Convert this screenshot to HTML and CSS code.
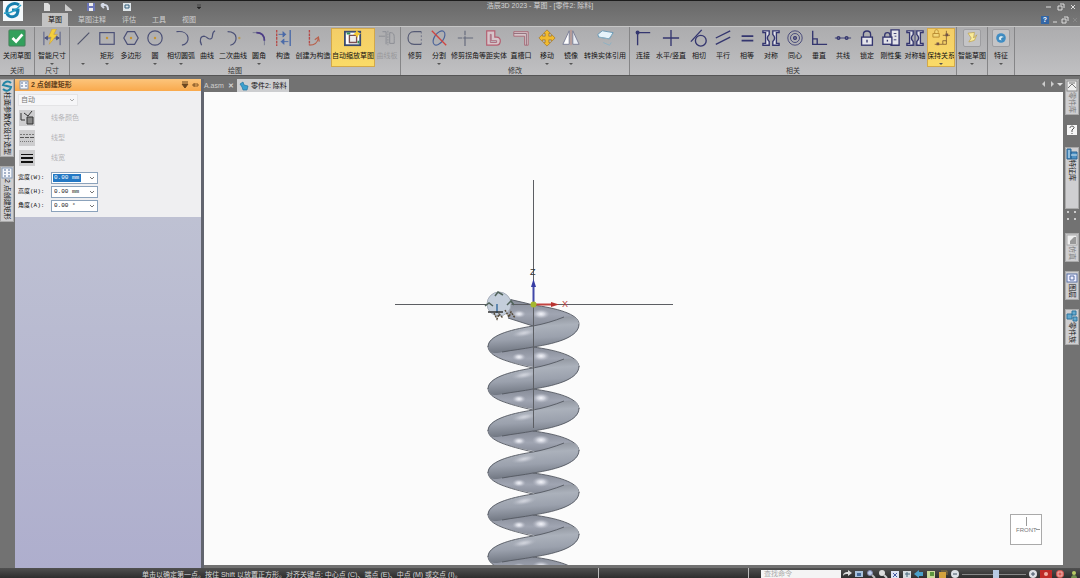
FILE: index.html
```
<!DOCTYPE html>
<html lang="zh-CN">
<head>
    <meta charset="UTF-8">
    <meta name="viewport" content="width=device-width, initial-scale=1.0">
    <title>浩辰3D 2023 - 草图 - [零件2: 除料]</title>
    <link rel="stylesheet" href="styles.css">
</head>
<body>
    <header class="header">
        <button class="logo" aria-label="应用程序菜单">
            <svg width="20" height="20" viewBox="0 0 20 20"><path d="M16 4C12 1 5 3 4 9c-1 6 4 8 8 6 2-1 3-3 3-6H9" fill="none" stroke="#167fae" stroke-width="3"/><path d="M1 12c5 1 11-2 17-8" fill="none" stroke="#2aa3c8" stroke-width="1.500"/></svg>
        </button>
        <div class="titlebar">
            <div class="quick">
                <button aria-label="新建"><svg width="10" height="9" viewBox="0 0 10 9"><path d="M2 0h4l2 2v6H2z" fill="#ddd"/></svg></button>
                <button aria-label="打开"><svg width="10" height="9" viewBox="0 0 10 9"><path d="M1 1l7 6v1H1z" fill="#ccc"/></svg></button>
                <button aria-label="保存"><svg width="10" height="9" viewBox="0 0 10 9"><path d="M1 0h8v8H1z" fill="#6c76b8"/><path d="M3 0h4v3H3zM3 5h4v3H3z" fill="#eee"/></svg></button>
                <button aria-label="撤销"><svg width="10" height="9" viewBox="0 0 10 9"><path d="M1 2h4c3 0 3 3 3 5M1 2l3-2M1 2l3 3" fill="none" stroke="#d5dbe8" stroke-width="2"/></svg></button>
                <button aria-label="选项"><svg width="10" height="9" viewBox="0 0 10 9"><path d="M1 0h8v8H1z" fill="#dfe6ea"/><path d="M3 2h4v3H3z" fill="none" stroke="#36607c"/></svg></button>
                <button class="more" aria-label="自定义快速访问工具栏"><svg width="6" height="6" viewBox="0 0 6 6"><path d="M1 1h4M1 3h4L3 5z" fill="#222" stroke="#222" stroke-width=".5"/></svg></button>
            </div>
            <div class="title">浩辰3D 2023 - 草图 - [零件2: 除料]</div>
            <div class="winbtns">
                <button aria-label="最小化"><svg width="8" height="8" viewBox="0 0 8 8"><path d="M1 4h5" stroke="#ddd" stroke-width="1"/></svg></button>
                <button aria-label="还原"><svg width="8" height="8" viewBox="0 0 8 8"><path d="M1 3h4v4H1zM3 1h4v4" fill="none" stroke="#ddd"/></svg></button>
                <button aria-label="关闭"><svg width="8" height="8" viewBox="0 0 8 8"><path d="M2 2l4 4M6 2L2 6" stroke="#ddd" stroke-width="1"/></svg></button>
            </div>
        </div>
        <div class="tabrow">
            <nav class="tabs">
                <a href="#" class="active">草图</a>
                <a href="#">草图注释</a>
                <a href="#">评估</a>
                <a href="#">工具</a>
                <a href="#">视图</a>
            </nav>
            <div class="docbtns">
                <button class="help" aria-label="帮助">?</button>
                <button aria-label="最小化文档"><svg width="8" height="8" viewBox="0 0 8 8"><path d="M2 6h4" stroke="#ddd"/></svg></button>
                <button aria-label="还原文档"><svg width="8" height="8" viewBox="0 0 8 8"><path d="M1 3h4v4H1zM3 1h4v4" fill="none" stroke="#ddd"/></svg></button>
                <button aria-label="关闭文档"><svg width="8" height="8" viewBox="0 0 8 8"><path d="M2 2l4 4M6 2L2 6" stroke="#888"/></svg></button>
            </div>
        </div>
    </header>

    <section class="ribbon">
        <div class="group">
            <div class="tools">
                <button class="tool w32"><svg width="20" height="20" viewBox="0 0 20 20"><rect x="1" y="1" width="18" height="18" rx="1" fill="#32a05c" stroke="#4c7a5c"/><path d="M5 10l4 4 7-8" fill="none" stroke="#fff" stroke-width="3"/></svg><span>关闭草图</span></button>
            </div>
            <div class="caption">关闭</div>
        </div>
        <div class="group">
            <div class="tools">
                <button class="tool w32"><svg width="20" height="20" viewBox="0 0 20 20"><path d="M1 3v15M19 3v15M2 10h16M2 10l3-2v4zM18 10l-3-2v4z" fill="#4d5580" stroke="#4d5580"/><path d="M10 0h5l-3 6h4L7 17l2-8H6z" fill="#f3cf3c" stroke="#c8983a" stroke-width=".6"/></svg><span>智能尺寸</span><i class="drop"></i></button>
            </div>
            <div class="caption">尺寸</div>
        </div>
        <div class="group">
            <div class="tools">
                <button class="tool w24" aria-label="直线"><svg width="20" height="20" viewBox="0 0 20 20"><path d="M4 17L17 4" stroke="#50546c" stroke-width="1.300"/></svg><span>&nbsp;</span><i class="drop"></i></button>
                <button class="tool w24"><svg width="20" height="20" viewBox="0 0 20 20"><rect x="2" y="4" width="16" height="13" fill="none" stroke="#4b5076" stroke-width="1.300"/><circle cx="10" cy="10" r="1.300" fill="#c7942f"/></svg><span>矩形</span><i class="drop"></i></button>
                <button class="tool w24"><svg width="20" height="20" viewBox="0 0 20 20"><path d="M6 3h8L18 10l-4 7H6L2 10z" fill="none" stroke="#4b5076" stroke-width="1.300"/><circle cx="10" cy="10" r="1.300" fill="#c7942f"/></svg><span>多边形</span></button>
                <button class="tool w24"><svg width="20" height="20" viewBox="0 0 20 20"><circle cx="10" cy="10" r="8" fill="none" stroke="#4b5076" stroke-width="1.300"/><circle cx="10" cy="10" r="1.300" fill="#c7942f"/></svg><span>圆</span><i class="drop"></i></button>
                <button class="tool w28"><svg width="20" height="20" viewBox="0 0 20 20"><path d="M5 3c16-2 16 14 6 15" fill="none" stroke="#4b5076" stroke-width="1.300"/></svg><span>相切圆弧</span><i class="drop"></i></button>
                <button class="tool w24"><svg width="20" height="20" viewBox="0 0 20 20"><path d="M4 18C1 12 3 8 7 8c4 1 4 4 7 3 4-1 0-7 5-9" fill="none" stroke="#4b5076" stroke-width="1.300"/></svg><span>曲线</span></button>
                <button class="tool w28"><svg width="20" height="20" viewBox="0 0 20 20"><path d="M4 3c12 0 12 13 3 15" fill="none" stroke="#4b5076" stroke-width="1.300"/><circle cx="17" cy="10" r="1.300" fill="#b79a58"/></svg><span>二次曲线</span></button>
                <button class="tool w24"><svg width="20" height="20" viewBox="0 0 20 20"><path d="M3 4h4q9 0 9 9v5" fill="none" stroke="#777b90"/><path d="M7 4q9 0 9 9" fill="none" stroke="#4c3c86" stroke-width="2"/></svg><span>圆角</span><i class="drop"></i></button>
                <button class="tool w24"><svg width="20" height="20" viewBox="0 0 20 20"><path d="M3 1v18" stroke="#b64a48" stroke-width="1.500" stroke-dasharray="3 1"/><path d="M18 1v18" stroke="#4a6aa8" stroke-width="1.500"/><path d="M5 6h8M13 6l-3-3v6zM16 14H8M8 14l3-3v6z" fill="#4a6aa8" stroke="#4a6aa8"/></svg><span>构造</span></button>
                <button class="tool w36"><svg width="20" height="20" viewBox="0 0 20 20"><path d="M6 1v17" stroke="#b64a48" stroke-width="1.500" stroke-dasharray="3 1"/><path d="M6 18c5 0 9-2 10-8M12 12l4-3 1 5" fill="none" stroke="#b8614c" stroke-width="1.300"/></svg><span>创建为构造</span></button>
                <button class="tool w44 on"><svg width="20" height="20" viewBox="0 0 20 20"><rect x="1" y="3" width="17" height="15" fill="#fff" stroke="#3a4b70" stroke-width="2"/><path d="M6 7h8v8H6z" fill="#eee" stroke="#7c4f50" stroke-width="1.500"/><path d="M3 4h4v2H3zM15 13h2v3h-2z" fill="#338a58"/><path d="M14 1l2 3 3 1-3 2-1 3-2-3-3-1 3-2z" fill="#f2c836"/></svg><span>自动缩放草图</span></button>
                <button class="tool w24" disabled><svg width="20" height="20" viewBox="0 0 20 20"><path d="M5 3h4v14M1 8h7M13 4c6 0 5 3 5 12h-5z" fill="none" stroke="#898b92"/><path d="M11 2v16" stroke="#898b92" stroke-dasharray="2 1"/></svg><span>曲线板</span></button>
            </div>
            <div class="caption">绘图</div>
        </div>
        <div class="group wide">
            <div class="tools">
                <button class="tool w24"><svg width="20" height="20" viewBox="0 0 20 20"><path d="M17 3H9C0 3 0 17 9 17h8" fill="none" stroke="#555a74" stroke-width="1.300"/><path d="M17 3v14" stroke="#696d82" stroke-dasharray="2 2"/></svg><span>修剪</span></button>
                <button class="tool w24"><svg width="20" height="20" viewBox="0 0 20 20"><ellipse cx="10" cy="10" rx="5" ry="9" transform="rotate(35 10 10)" fill="none" stroke="#4a6298" stroke-width="1.300"/><path d="M2 2l16 16" stroke="#cf4541" stroke-width="1.500"/></svg><span>分割</span><i class="drop"></i></button>
                <button class="tool w28"><svg width="20" height="20" viewBox="0 0 20 20"><path d="M10 10h9M10 10v9" stroke="#656a7c" stroke-width="1.300"/><path d="M2 10h8M10 2v8" stroke="#656a7c" stroke-width="1.300" stroke-dasharray="5 1"/></svg><span>修剪拐角</span></button>
                <button class="tool w28"><svg width="20" height="20" viewBox="0 0 20 20"><path d="M3 2h9v7h2c6 0 5 9 0 9H3z" fill="#d6c5ca" stroke="#b45e70" stroke-width="1.300"/><path d="M7 6h1v7h6v2H7z" fill="#c1c1c4" stroke="#a9687a"/></svg><span>等距实体</span></button>
                <button class="tool w28"><svg width="20" height="20" viewBox="0 0 20 20"><path d="M2 3h16v15h-4V8H2z" fill="#d6c5ca" stroke="#a96774"/><path d="M2 5h14v13" fill="none" stroke="#8b6b76"/></svg><span>直槽口</span></button>
                <button class="tool w24"><svg width="20" height="20" viewBox="0 0 20 20"><path d="M10 1l4 4h-2v3h3V6l4 4-4 4v-2h-3v3h2l-4 4-4-4h2v-3H5v2l-4-4 4-4v2h3V5H6z" fill="#f2bb2d" stroke="#a77926" stroke-width=".8"/></svg><span>移动</span><i class="drop"></i></button>
                <button class="tool w24"><svg width="20" height="20" viewBox="0 0 20 20"><path d="M8 2v15H1z" fill="#fff" stroke="#777a93"/><path d="M12 2v15h7z" fill="#e9edf4" stroke="#777a93"/><path d="M10 1v17" stroke="#bd8780"/></svg><span>镜像</span><i class="drop"></i></button>
                <button class="tool w44"><svg width="20" height="20" viewBox="0 0 20 20"><path d="M2 6l5-4 12 2-4 7-12-2z" fill="#e6f3fa" stroke="#6595b2"/><path d="M3 9l11 2 5-6M8 15l7 3 2-3" fill="none" stroke="#8cb1c4"/></svg><span>转换实体引用</span></button>
            </div>
            <div class="caption">修改</div>
        </div>
        <div class="group">
            <div class="tools">
                <button class="tool w24 navy"><svg width="20" height="20" viewBox="0 0 20 20"><path d="M4 18V4h14"/><circle cx="4" cy="4" r="1.500"/></svg><span>连接</span></button>
                <button class="tool w32 navy"><svg width="20" height="20" viewBox="0 0 20 20"><path d="M10 1v18M1 10h18"/></svg><span>水平/竖直</span></button>
                <button class="tool w24 navy"><svg width="20" height="20" viewBox="0 0 20 20"><circle cx="12" cy="13" r="6"/><path d="M1 14L13 1"/></svg><span>相切</span></button>
                <button class="tool w24 navy"><svg width="20" height="20" viewBox="0 0 20 20"><path d="M2 10l16-8M2 17l16-8"/></svg><span>平行</span></button>
                <button class="tool w24 navy"><svg width="20" height="20" viewBox="0 0 20 20"><path d="M4 8h13M4 13h13" stroke-width="2"/></svg><span>相等</span></button>
                <button class="tool w24 navy"><svg width="20" height="20" viewBox="0 0 20 20"><path class="light" d="M1 2h7v4q-4 4 0 8v4H1v-2h3V4H1zM19 2h-7v4q4 4 0 8v4h7v-2h-3V4h3z"/></svg><span>对称</span></button>
                <button class="tool w24 navy"><svg width="20" height="20" viewBox="0 0 20 20"><circle cx="10" cy="10" r="8" stroke-width=".9"/><circle cx="10" cy="10" r="5" stroke-width=".9"/><circle cx="10" cy="10" r="1.500"/></svg><span>同心</span></button>
                <button class="tool w24 navy"><svg width="20" height="20" viewBox="0 0 20 20"><path d="M3 2v15h16M3 11h5v6"/></svg><span>垂直</span></button>
                <button class="tool w24 navy"><svg width="20" height="20" viewBox="0 0 20 20"><path d="M1 10h18" stroke-width="1"/><circle cx="5" cy="10" r="1.500"/><circle cx="14" cy="10" r="1.500"/></svg><span>共线</span></button>
                <button class="tool w24 navy"><svg width="20" height="20" viewBox="0 0 20 20"><path d="M6 9V6c0-5 8-5 8 0v3"/><rect class="light" x="4" y="9" width="12" height="9"/><path d="M10 12v3"/></svg><span>锁定</span></button>
                <button class="tool w24 navy"><svg width="20" height="20" viewBox="0 0 20 20"><path class="light" d="M10 1h9v17h-9z"/><path d="M13 5h3M14 8h2M13 12h3" stroke-width="1"/><path d="M3 9V7c0-4 6-4 6 0v2"/><rect class="light" x="1" y="9" width="10" height="8"/><path d="M6 12v2"/></svg><span>刚性集</span></button>
                <button class="tool w24 navy"><svg width="20" height="20" viewBox="0 0 20 20"><path class="light" d="M1 2h7v4q-4 4 0 8v4H1v-2h3V4H1zM19 2h-7v4q4 4 0 8v4h7v-2h-3V4h3z"/><path d="M10 1v18" stroke-width="1"/></svg><span>对称轴</span></button>
                <button class="tool w28 on"><svg width="20" height="20" viewBox="0 0 20 20"><path d="M3 5V3c0-3 4-3 4 0v1M1 5h7v4H1z" fill="#f3d778" stroke="#b78830"/><path d="M3 17h9M12 13h4v4h-4zM16 14V2M12 7h8" fill="none" stroke="#8a6639"/><path d="M5 15h3v3H5zM15 5h3v3h-3z" fill="#715349"/></svg><span>保持关系</span><i class="drop"></i></button>
            </div>
            <div class="caption">相关</div>
        </div>
        <div class="group">
            <div class="tools">
                <button class="tool w28 framed"><svg width="20" height="20" viewBox="0 0 20 20"><path d="M5 4l4 6-3 5 7-2 3-7-4 4 1-7z" fill="#f9eb9a" stroke="#b89a42" stroke-width=".8"/></svg><span>智能草图</span><i class="drop"></i></button>
            </div>
        </div>
        <div class="group">
            <div class="tools">
                <button class="tool w24 framed"><svg width="20" height="20" viewBox="0 0 20 20"><circle cx="10" cy="10" r="6" fill="#3f8dc4"/><path d="M7 12c-1-6 6-6 7-2-3-1-4 0-3 3" fill="#d6ecf5" stroke="#256e9f" stroke-width=".7"/></svg><span>特征</span><i class="drop"></i></button>
            </div>
        </div>
    </section>

    <div class="workspace">
        <aside class="rail">
            <button class="railtab"><svg width="12" height="12" viewBox="0 0 12 12"><path d="M10 3C7 0 3 2 2 5l8 2c-1 4-5 5-8 2" fill="none" stroke="#2385a5" stroke-width="2"/></svg>柱面参数化设计选型</button>
            <button class="railtab"><svg width="12" height="12" viewBox="0 0 12 12"><rect x="1" y="1" width="10" height="10" fill="#f4f6fa" stroke="#8096b3"/><path d="M3 3h2M3 6h2M3 9h2M7 3h2M7 6h2M7 9h2" stroke="#587199"/></svg>2 点创建矩形</button>
        </aside>

        <section class="panel">
            <div class="panelhead">
                <svg width="10" height="10" viewBox="0 0 10 10"><rect x="1" y="1" width="8" height="8" fill="#f4f6fa" stroke="#8096b3"/><path d="M2 3h2M2 6h2M6 3h2M6 6h2" stroke="#587199"/></svg>
                <h1>2 点创建矩形</h1>
                <button aria-label="面板菜单"><svg width="8" height="8" viewBox="0 0 8 8"><path d="M1 1h6M1 3h6L4 7z" fill="#6b4620" stroke="#6b4620"/></svg></button>
                <button aria-label="固定面板"><svg width="8" height="8" viewBox="0 0 8 8"><path d="M1 4h2M3 2v4M3 3h4v2H3z" fill="none" stroke="#8a5c2b"/></svg></button>
            </div>
            <form class="panelbody">
                <div class="combo style">
                    <select aria-label="样式" disabled><option>自动</option></select>
                    <svg width="8" height="8" viewBox="0 0 8 8"><path d="M2 3l2 2 2-2" fill="none" stroke="#aaa"/></svg>
                </div>
                <div class="prop"><button type="button" id="color" aria-label="线条颜色"><svg width="16" height="16" viewBox="0 0 16 16"><path d="M2 3v7h4M13 1L9 6M5 3l4 3" fill="none" stroke="#333"/><path d="M8 7h6v7H8z" fill="#888" stroke="#333"/></svg></button><label for="color">线条颜色</label></div>
                <div class="prop"><button type="button" id="linetype" aria-label="线型"><svg width="16" height="16" viewBox="0 0 16 16"><path d="M1 4.500h14" stroke="#777" stroke-dasharray="2 1"/><path d="M1 7.500h14" stroke="#555" stroke-dasharray="4 1"/><path d="M1 11.500h14" stroke="#777" stroke-dasharray="1 1"/></svg></button><label for="linetype">线型</label></div>
                <div class="prop"><button type="button" id="weight" aria-label="线宽"><svg width="16" height="16" viewBox="0 0 16 16"><path d="M2 4.500h12" stroke="#111"/><path d="M2 8h12M2 12h12" stroke="#111" stroke-width="2"/></svg></button><label for="weight">线宽</label></div>
                <div class="fields">
                    <div class="field"><label for="w">宽度(W):</label><div class="combo"><input id="w" class="selected" type="text" value="0.00 mm"><svg width="8" height="8" viewBox="0 0 8 8"><path d="M2 3l2 2 2-2" fill="none" stroke="#777"/></svg></div></div>
                    <div class="field"><label for="h">高度(H):</label><div class="combo"><input id="h" type="text" value="0.00 mm"><svg width="8" height="8" viewBox="0 0 8 8"><path d="M2 3l2 2 2-2" fill="none" stroke="#777"/></svg></div></div>
                    <div class="field"><label for="a">角度(A):</label><div class="combo"><input id="a" type="text" value="0.00 °"><svg width="8" height="8" viewBox="0 0 8 8"><path d="M2 3l2 2 2-2" fill="none" stroke="#777"/></svg></div></div>
                </div>
            </form>
        </section>

        <main class="document">
            <div class="doctabs">
                <button class="doctab">A.asm <b>✕</b></button>
                <button class="doctab current"><svg width="10" height="10" viewBox="0 0 10 10"><path d="M1 3l3-2 1 3 4 1-1 4H4L3 6z" fill="#3aa0cf" stroke="#2475a2" stroke-width=".7"/></svg>零件2: 除料</button>
                <div class="scroll">
                    <button aria-label="上一个"><svg width="6" height="6" viewBox="0 0 6 6"><path d="M4 0v6L1 3z" fill="#ccc"/></svg></button>
                    <button aria-label="下一个"><svg width="6" height="6" viewBox="0 0 6 6"><path d="M2 0v6l3-3z" fill="#ccc"/></svg></button>
                    <button aria-label="列表"><svg width="6" height="6" viewBox="0 0 6 6"><path d="M0 2h6L3 5z" fill="#ddd"/></svg></button>
                </div>
            </div>
            <div class="canvas">
                <svg class="scene" viewBox="204 92 859 474" preserveAspectRatio="xMidYMin slice">
                    <defs>
                        <linearGradient id="front" x1="0" y1="0" x2=".15" y2="1">
                            <stop offset="0" stop-color="#858a93"/>
                            <stop offset=".35" stop-color="#abb1bb"/>
                            <stop offset=".65" stop-color="#9ba1ad"/>
                            <stop offset="1" stop-color="#707681"/>
                        </linearGradient>
                        <linearGradient id="back" x1="0" y1="0" x2="0" y2="1">
                            <stop offset="0" stop-color="#858a96"/>
                            <stop offset=".45" stop-color="#a0a5b2"/>
                            <stop offset="1" stop-color="#777c88"/>
                        </linearGradient>
                        <radialGradient id="shine">
                            <stop offset="0" stop-color="#f4f5fa"/>
                            <stop offset=".4" stop-color="#dddfe8" stop-opacity=".8"/>
                            <stop offset="1" stop-color="#b2b6c2" stop-opacity="0"/>
                        </radialGradient>
                        <g id="backcoil">
                            <path d="M488 346C488 357 508 362 533 367L562 374C575 371 579 369 579 366C579 356 555 350 533 347L505 349Z" fill="url(#back)"/>
                            <path d="M488 346C488 357 508 362 533 368M533 347C556 350 579 356 579 367" fill="none" stroke="#535861" stroke-width=".9"/>
                            <ellipse cx="519" cy="357" rx="7" ry="4" fill="url(#shine)"/>
                            <ellipse cx="541" cy="356" rx="9" ry="5" fill="url(#shine)"/>
                        </g>
                        <g id="frontcoil">
                            <path d="M564 317C554 321 544 324 533 326C508 330 488 336 488 346C488 351 492 355 502 352C513 350 523 349 533 347C560 343 579 336 579 325C579 318 574 315 564 317Z" fill="url(#front)"/>
                            <path d="M564 317C554 321 544 324 533 326C508 330 488 336 488 347M502 352C513 350 523 349 533 347C560 343 579 336 579 324" fill="none" stroke="#535861" stroke-width=".9"/>
                            <ellipse cx="524" cy="333" rx="13" ry="4" transform="rotate(-10 524 333)" fill="url(#shine)" opacity=".6"/>
                        </g>
                    </defs>
                    <path d="M505 298C515 301 523 302 533 305C556 308 579 314 579 324C579 330 570 333 558 334L533 326L508 318Z" fill="url(#back)"/>
                    <path d="M505 298C515 301 523 302 533 305C556 308 579 314 579 324M508 318L533 326" fill="none" stroke="#535861" stroke-width=".9"/>
                    <ellipse cx="519" cy="314" rx="7" ry="4" fill="url(#shine)"/>
                    <ellipse cx="541" cy="314" rx="9" ry="5" fill="url(#shine)"/>
                    <use href="#backcoil"/>
                    <use href="#backcoil" y="42"/>
                    <use href="#backcoil" y="84"/>
                    <use href="#backcoil" y="126"/>
                    <use href="#backcoil" y="168"/>
                    <use href="#backcoil" y="210"/>
                    <use href="#frontcoil"/>
                    <use href="#frontcoil" y="42"/>
                    <use href="#frontcoil" y="84"/>
                    <use href="#frontcoil" y="126"/>
                    <use href="#frontcoil" y="168"/>
                    <use href="#frontcoil" y="210"/>

                    <!-- sketch axes -->
                    <path d="M533.500 180v248M395 304.500h278" stroke="#5c5e63"/>
                    <path d="M533.500 302v-18" stroke="#4148a8" stroke-width="2"/>
                    <path d="M531 287l2.500-8 2.500 8z" fill="#363ca4"/>
                    <path d="M535 304.500h17" stroke="#c14340" stroke-width="2"/>
                    <path d="M551 302l8 2.500-8 2.500z" fill="#b93431"/>
                    <circle cx="533.500" cy="304.500" r="3" fill="#a5b72f"/>
                    <text x="530" y="275" class="axis">Z</text>
                    <text x="562" y="307" class="axis red">X</text>

                    <!-- wire profile and cursor -->
                    <circle cx="499" cy="304" r="12" fill="#c4cedb" stroke="#a8afba"/>
                    <path d="M497 304v9" stroke="#3d6fa0" stroke-width="1.500"/>
                    <path d="M485 306l4-3 4 3M495 296l3-4 5 3M507 305l4-4 3 4" fill="none" stroke="#51635b" stroke-width="1.500"/>
                    <path d="M488 312h15" stroke="#333" stroke-width="1.500"/>
                    <path d="M494 313l3 6 2-5 4 4M505 310l4 7 2-5 4 6" fill="none" stroke="#554a39" stroke-width="1.500" stroke-dasharray="2 1"/>

                    <!-- view cube -->
                    <rect x="1010.500" y="514.500" width="31" height="30" fill="#fff" stroke="#aaa"/>
                    <path d="M1026.500 517v9M1036 529.500h4" stroke="#999"/>
                    <text x="1016" y="532" class="cube">FRONT</text>
                </svg>
            </div>
        </main>

        <aside class="rail right">
            <button class="railtab dim"><svg width="12" height="12" viewBox="0 0 12 12"><rect x="1" y="1" width="10" height="10" fill="#eee" stroke="#888"/><path d="M2 8l4-4 4 4M3 3h6" fill="none" stroke="#777"/></svg>零件库</button>
            <button class="railtab small" aria-label="帮助"><svg width="12" height="12" viewBox="0 0 12 12"><rect x="1" y="1" width="10" height="10" fill="#f5f5f5"/><path d="M4 4c0-3 5-2 4 0L6 6v2M6 9v1" fill="none" stroke="#555"/></svg></button>
            <button class="railtab tall"><svg width="12" height="12" viewBox="0 0 12 12"><path d="M1 1h4v10H1zM5 4h6v7H5z" fill="#4c91c4" stroke="#2b6493"/><path d="M3 2v8M5 7h6" stroke="#d5e9f4"/></svg>特征库</button>
            <div class="grip"><svg width="12" height="12" viewBox="0 0 12 12"><path d="M1 2h2M8 2h2M1 9h2M8 9h2" stroke="#ccc" stroke-width="2"/></svg></div>
            <button class="railtab dim"><svg width="12" height="12" viewBox="0 0 12 12"><rect x="1" y="1" width="10" height="10" fill="#eee" stroke="#aaa"/><path d="M4 10V7l4-4h2v7z" fill="#999"/></svg>仿真</button>
            <button class="railtab"><svg width="12" height="12" viewBox="0 0 12 12"><rect x="1" y="2" width="10" height="8" fill="#eef" stroke="#5871a3"/><path d="M4 4h4v4H4z" fill="none" stroke="#5871a3"/></svg>图层</button>
            <button class="railtab"><svg width="12" height="12" viewBox="0 0 12 12"><path d="M1 4h5v5H1zM6 1h4v4H6zM7 7h4v4H7z" fill="#65aacf" stroke="#2f759e"/></svg>零件族</button>
        </aside>
    </div>

    <footer class="status">
        <p class="prompt">单击以确定第一点。按住 Shift 以放置正方形。对齐关键点: 中心点 (C)、端点 (E)、中点 (M) 或交点 (I)。</p>
        <div class="message"></div>
        <div class="find"><input type="text" aria-label="查找命令" placeholder="查找命令"></div>
        <div class="view">
            <button aria-label="转到"><svg width="10" height="8" viewBox="0 0 10 8"><path d="M1 6c0-3 2-4 5-4V0l4 3-4 3V4C4 4 2 4 1 6z" fill="#ddd"/></svg></button>
            <button aria-label="适合"><svg width="10" height="8" viewBox="0 0 10 8"><path d="M1 1h8v6H1z" fill="#a9c2dc"/><path d="M3 3h4v3H3z" fill="#486b98"/></svg></button>
            <button aria-label="区域缩放"><svg width="10" height="8" viewBox="0 0 10 8"><circle cx="4" cy="3" r="2.500" fill="#bfd0e8" stroke="#8386ad"/><path d="M6 5l3 3" stroke="#bbb" stroke-width="2"/></svg></button>
            <button aria-label="缩放"><svg width="10" height="8" viewBox="0 0 10 8"><circle cx="4" cy="3" r="3" fill="#ddd"/><path d="M6 5l3 3" stroke="#ccc" stroke-width="2"/></svg></button>
            <button aria-label="平移"><svg width="10" height="8" viewBox="0 0 10 8"><path d="M1 1h8v7H1z" fill="#dce2f2"/><path d="M3 3l4 4M7 3L3 7" stroke="#4459a1"/></svg></button>
            <button aria-label="正视"><svg width="10" height="8" viewBox="0 0 10 8"><path d="M1 1h8v7H1z" fill="#d5dde2"/><path d="M3 4h5M5 2v5" stroke="#49697c"/></svg></button>
            <button aria-label="上一视图"><svg width="10" height="8" viewBox="0 0 10 8"><path d="M0 4l5-4v2h4v4H5v2z" fill="#4aa0c9"/></svg></button>
            <button aria-label="样式"><svg width="10" height="8" viewBox="0 0 10 8"><path d="M1 1h8v7H1z" fill="#cadb9c"/><path d="M4 2h4v4H4z" fill="#5c963f"/></svg></button>
            <button aria-label="视图方向"><svg width="10" height="8" viewBox="0 0 10 8"><path d="M1 2h7v6H1z" fill="#d3a13d"/><path d="M3 1h6v4" fill="none" stroke="#8e753c"/></svg></button>
            <button aria-label="缩小"><svg width="10" height="8" viewBox="0 0 10 8"><circle cx="5" cy="4" r="4" fill="#dde1e6"/><path d="M3 4h4" stroke="#456"/></svg></button>
            <input class="zoom" type="range" aria-label="缩放级别" value="54">
            <button aria-label="放大"><svg width="10" height="8" viewBox="0 0 10 8"><circle cx="5" cy="4" r="4" fill="#dde1e6"/><path d="M3 4h4M5 2v4" stroke="#456"/></svg></button>
            <button aria-label="录制"><svg width="12" height="8" viewBox="0 0 12 8"><path d="M0 0h12v8H0z" fill="#c02a28"/><circle cx="6" cy="4" r="2" fill="#f1b1a7"/></svg></button>
            <button aria-label="停止"><svg width="12" height="8" viewBox="0 0 12 8"><circle cx="6" cy="4" r="4" fill="#d45b56"/><path d="M4 2h4v4H4z" fill="none" stroke="#f0b7b2"/></svg></button>
            <button aria-label="用户"><svg width="12" height="8" viewBox="0 0 12 8"><circle cx="6" cy="3" r="2" fill="#b7cb65"/><path d="M3 8c0-4 6-4 6 0z" fill="#6f8f4b"/></svg></button>
        </div>
    </footer>
</body>
</html>
```
FILE: styles.css
```
* {
    box-sizing: border-box;
}
body {
    margin: 0;
    height: 100vh;
    display: flex;
    flex-direction: column;
    overflow: hidden;
    background: #727272;
    color: #111;
    font-family: "Liberation Sans", "Noto Sans CJK SC", sans-serif;
    font-size: 7px;
    line-height: 8px;
}
button {
    padding: 0;
    border: none;
    background: none;
    color: inherit;
    font: inherit;
    cursor: pointer;
}
svg {
    display: block;
    flex: none;
}
input, select {
    font: inherit;
}

/* title bar and ribbon tabs */
.header {
    position: relative;
    border-top: 1px solid #1c1c1c;
    background: linear-gradient(#686868, #7a7a7a);
    color: #d4d4d4;
}
.logo {
    position: absolute;
    left: 3px;
    top: 0;
    background: #f4f8fa;
}
.titlebar {
    display: grid;
    grid-template-columns: 1fr auto 1fr;
    height: 12px;
}
.quick {
    display: flex;
    gap: 12px;
    padding-left: 42px;
}
.quick button:nth-child(4) {
    margin-left: -8px;
}
.quick .more {
    margin-left: 52px;
}
.title {
    line-height: 9px;
}
.winbtns, .docbtns {
    display: flex;
    justify-content: flex-end;
    align-items: center;
    gap: 4px;
    padding-right: 3px;
}
.docbtns {
    gap: 2px;
    padding-right: 1px;
}
.help {
    width: 8px;
    background: #3366a5;
    color: #fff;
    font-weight: bold;
}
.tabrow {
    display: flex;
    justify-content: space-between;
    height: 13px;
}
.tabs {
    display: flex;
    gap: 4px;
    padding-left: 42px;
}
.tabs a {
    padding: 0 6px;
    line-height: 13px;
    color: #d0d0d0;
    text-decoration: none;
}
.tabs .active {
    background: #c3c3c3;
    color: #111;
}

.ribbon {
    display: flex;
    height: 50px;
    background: linear-gradient(#acacae, #c0c0c2);
    border-top: 1px solid #c6c6c6;
    border-bottom: 1px solid #555;
}
.group {
    display: flex;
    flex-direction: column;
    justify-content: space-between;
    padding: 1px 1px 0;
    border-right: 1px solid #858587;
}
.group.wide {
    padding: 1px 2px 0;
}
.tools {
    display: flex;
}
.tool {
    display: flex;
    flex-direction: column;
    align-items: center;
    height: 39px;
    padding-top: 1px;
    white-space: nowrap;
}
.tool svg {
    width: 18px;
    height: 18px;
}
.tool span {
    margin-top: 5px;
    line-height: 8px;
}
.tool:disabled {
    color: #98989b;
}
.w24 { width: 24px; }
.w28 { width: 28px; }
.w32 { width: 32px; }
.w36 { width: 36px; }
.w44 { width: 44px; }
.tool.on {
    background: linear-gradient(#f3cd68, #fadb67);
    outline: 1px solid #d2a84a;
    outline-offset: -1px;
}
.drop {
    margin-top: 3px;
    border: 2px solid transparent;
    border-top-color: #555;
    border-bottom: none;
}
.navy svg {
    fill: none;
    stroke: #34366f;
    stroke-width: 1.5px;
}
.navy .light {
    fill: #e4e4ea;
}
.framed svg {
    border: 1px solid #9d9da0;
    border-radius: 2px;
    background: #c4c4c6;
}
.caption {
    text-align: center;
    color: #333;
}

/* side rails */
.workspace {
    flex: 1;
    display: flex;
    min-height: 0;
    padding-top: 3px;
}
.rail {
    display: flex;
    flex-direction: column;
    gap: 9px;
    width: 15px;
    padding-right: 1px;
}
.railtab {
    display: flex;
    align-items: center;
    padding: 0 0 1px;
    writing-mode: vertical-rl;
    text-orientation: sideways;
    line-height: 13px;
    background: #cfcfd1;
    border: 1px solid #aaa;
}
.right {
    width: 17px;
    padding-left: 2px;
}
.right .dim {
    color: #777;
}
.right .small {
    height: 14px;
    background: none;
    border: none;
}
.right .tall {
    height: 62px;
}
.grip {
    height: 14px;
    margin-top: -8px;
    padding-left: 1px;
}

/* command panel */
.panel {
    width: 189px;
    border-right: 3px solid #62656f;
    background: linear-gradient(#bfc2d3 25%, #aeaecd);
}
.panelhead {
    display: flex;
    align-items: center;
    gap: 2px;
    height: 12px;
    padding: 0 2px 0 4px;
    background: linear-gradient(#fcc57c, #f9a94c);
}
.panelhead h1 {
    flex: 1;
    margin: 0;
    font-size: 7px;
    color: #5d3c19;
}
.panelbody {
    display: flex;
    flex-direction: column;
    gap: 4px;
    padding: 3px 3px 5px;
    background: #efeff1;
}
.combo {
    display: flex;
    align-items: center;
    justify-content: space-between;
    width: 47px;
    height: 12px;
    padding: 1px;
    border: 1px solid #8ba2bb;
    background: #fff;
    font: 6px/8px "Liberation Mono", "Noto Sans CJK SC", monospace;
}
.combo input, .combo select {
    appearance: none;
    width: 28px;
    height: 8px;
    padding: 0 0 0 1px;
    border: none;
    background: none;
    color: #111;
}
.combo .selected {
    background: #2478c4;
    color: #fff;
}
.combo.style {
    width: 60px;
    border-color: #e4e4e6;
    background: #f6f6f8;
    font-size: 7px;
}
.combo.style select {
    opacity: 1;
    color: #777;
}
.prop {
    display: flex;
    align-items: center;
    gap: 16px;
    padding-left: 1px;
    color: #b5b5b8;
}
.prop button {
    background: #cdcdcf;
}
.fields {
    display: flex;
    flex-direction: column;
    gap: 2px;
    padding-top: 2px;
}
.field {
    display: flex;
    align-items: center;
}
.field label {
    width: 33px;
    font: 6px/8px "Liberation Mono", "Noto Sans CJK SC", monospace;
}

/* document area */
.document {
    flex: 1;
    display: flex;
    flex-direction: column;
    min-width: 0;
}
.doctabs {
    display: flex;
    height: 13px;
    color: #d0d0d0;
}
.doctab {
    display: flex;
    align-items: center;
    gap: 4px;
    width: 33px;
    white-space: nowrap;
}
.doctab.current {
    gap: 2px;
    width: auto;
    padding: 0 2px;
    background: #cdced0;
    color: #111;
}
.scroll {
    display: flex;
    align-items: center;
    gap: 2px;
    margin-left: auto;
    padding-bottom: 4px;
}
.canvas {
    flex: 1;
    min-height: 0;
    margin-bottom: 3px;
    background: #fbfbfb;
}
.scene {
    width: 100%;
    height: 100%;
}
.axis {
    font: 9px "Liberation Sans", sans-serif;
    fill: #333;
}
.axis.red {
    fill: #b93f3c;
}
.cube {
    font: 6px "Liberation Sans", sans-serif;
    fill: #777;
}

/* status bar */
.status {
    display: flex;
    height: 10px;
    overflow: hidden;
    background: linear-gradient(#505050, #2e2e2e);
    color: #d8d8d8;
}
.prompt {
    flex: 1;
    margin: 0;
    padding: 3px 0 0 142px;
    line-height: 8px;
    white-space: nowrap;
}
.message {
    width: 150px;
    border-left: 1px solid #bbb;
}
.find {
    padding-left: 12px;
    border-left: 1px solid #bbb;
}
.find input {
    display: block;
    width: 80px;
    height: 8px;
    margin-top: 2px;
    padding: 0 3px;
    border: none;
    background: #f4f4f4;
}
.find input::placeholder {
    color: #aaa;
}
.view {
    display: flex;
    align-items: center;
    gap: 2px;
    padding: 2px 0 0 1px;
}
.zoom {
    appearance: none;
    width: 64px;
    height: 8px;
    margin: 0;
    background: linear-gradient(#888, #888) center / 100% 1px no-repeat;
}
.zoom::-webkit-slider-thumb {
    appearance: none;
    width: 6px;
    height: 8px;
    background: #b8cbe4;
}
```
